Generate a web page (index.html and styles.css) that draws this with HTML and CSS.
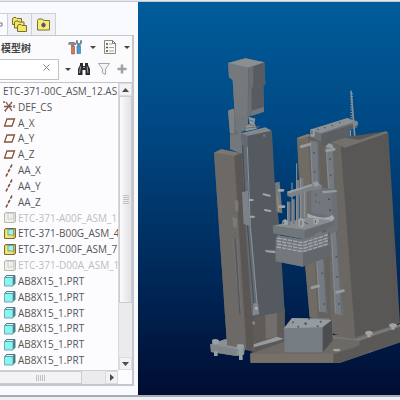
FILE: index.html
```
<!DOCTYPE html>
<html lang="zh-CN">
<head>
    <meta charset="UTF-8">
    <meta name="viewport" content="width=device-width, initial-scale=1.0">
    <title>模型树</title>
    <link rel="stylesheet" href="styles.css">
</head>
<body>

<!-- shared icons -->
<svg class="defs" width="0" height="0">
    <symbol id="i-csys" viewBox="0 0 13 13">
        <path d="M1 6.5h8M3 2l6 9M9 2L2 11" stroke="#855743" stroke-width="1.3" fill="none"/>
        <path d="M0 1l2 2M2 1L0 3M1 10l2 2M10 5l2 3M12 5l-2 3" stroke="#8d8580" fill="none"/>
    </symbol>
    <symbol id="i-plane" viewBox="0 0 13 13">
        <path d="M4 3H11.500L9 10H1.500z" fill="#fff" stroke="#875238" stroke-width="1.3"/>
    </symbol>
    <symbol id="i-axis" viewBox="0 0 13 13">
        <path d="M3 12.500L9 .5" stroke="#855039" stroke-width="1.6" stroke-dasharray="3.500 1.500" fill="none"/>
    </symbol>
    <symbol id="i-asm" viewBox="0 0 13 13">
        <path d="M1.500 2.500l1-1h10v9l-1 1h-10z" fill="#d9b83f" stroke="#6f6a45"/>
        <path d="M2 3h3v5h5v3H2z" fill="#fbe35f"/>
        <path d="M5 2.500h5.500v5.500H5z" fill="#93f4f6" stroke="#5f9ba0" stroke-width=".8"/>
    </symbol>
    <symbol id="i-part" viewBox="0 0 13 13">
        <path d="M1.500 3.500l2-2h8.500v8l-2 2z" fill="#3f8791" stroke="#4d6164" stroke-width=".8"/>
        <path d="M1.500 3.500h8.500v8.500h-8.500z" fill="#8af4f3" stroke="#5f989c" stroke-width=".8"/>
        <path d="M2.500 3l1.500-1H11L9.500 3z" fill="#c8fbfb"/>
    </symbol>
</svg>

<div class="app">
    <div class="ribbon"></div>
    <div class="main">
        <div class="side">
            <div class="tabs">
                <button class="tab tab-active" type="button" aria-label="模型树">
                    <svg width="3" height="5"><path d="M0 1h2v3H0" fill="none" stroke="#7d7088"/></svg>
                </button>
                <button class="tab" type="button" aria-label="文件夹浏览器">
                    <svg width="17" height="17" viewBox="0 0 17 17">
                        <g fill="#f4e766" stroke="#746f34">
                            <path d="M1.500 8.500v-6L3 1.500h2l1 1h4.500v6z"/>
                            <path d="M3.500 12V6L5 5h2l1 1h5v6z"/>
                            <path d="M6.500 15.500V9.500l1.500-1h2l1 1h4.500v6z"/>
                        </g>
                    </svg>
                </button>
                <button class="tab" type="button" aria-label="收藏夹">
                    <svg width="15" height="15" viewBox="0 0 15 15">
                        <path d="M1.500 13V3.500l1-1.500h4l1 1.500H13.500V13z" fill="#f6ed70" stroke="#77723b"/>
                        <path d="M7.500 5.500v5M5 8h5M6 6.500l3 3M9 6.500l-3 3" stroke="#514f8c" stroke-width="1.200"/>
                    </svg>
                </button>
            </div>

            <div class="panel">
                <div class="title-row">
                    <h2>模型树</h2>
                    <button class="tool" type="button" aria-label="设置">
                        <svg width="16" height="16" viewBox="0 0 16 16">
                            <path d="M1 5l1-2h5l2 1v2H7v1H4V5.500L2 6z" fill="#7d8a93"/>
                            <path d="M4.500 7h3v8h-3z" fill="#d9794c" stroke="#925139" stroke-width=".6"/>
                            <path d="M10 7h3.500v7.500H10z" fill="#4b9cd0" stroke="#34709b" stroke-width=".6"/>
                            <path d="M9 1v3l1.500 3H13l2-3V1l-2 .5V4h-2V1.500z" fill="#71899a"/>
                        </svg>
                    </button>
                    <span class="caret"></span>
                    <button class="tool" type="button" aria-label="显示">
                        <svg width="14" height="16" viewBox="0 0 14 16">
                            <path d="M1.500 1.500h8l3 3v10h-11z" fill="#fafaf4" stroke="#8b8b82"/>
                            <path d="M9.500 1.500v3h3" fill="none" stroke="#77776f"/>
                            <path d="M3 5h2M3 8.500h2M3 12h2" stroke="#4c4c4c" stroke-width="1.500"/>
                            <path d="M6 5h3M6 8.500h5M6 12h5" stroke="#a5a5a5"/>
                        </svg>
                    </button>
                    <span class="caret"></span>
                </div>

                <div class="search-row">
                    <div class="search">
                        <input type="text" aria-label="搜索">
                        <button class="clear" type="button" aria-label="清除">
                            <svg width="7" height="7" viewBox="0 0 7 7"><path d="M.5.5l6 6M6.500.5l-6 6" stroke="#858585"/></svg>
                        </button>
                    </div>
                    <span class="caret"></span>
                    <button class="tool" type="button" aria-label="查找">
                        <svg width="14" height="14" viewBox="0 0 14 14">
                            <path d="M3 1h3v3h2V1h3v2l2 4v6H8.500V8h-3v5H1V7l2-4z" fill="#2c2c2c"/>
                            <path d="M3.500 4.500L2.500 11M10 4.500l1 6.500M6 5.500h2" stroke="#a5a5a5"/>
                        </svg>
                    </button>
                    <button class="tool" type="button" aria-label="过滤">
                        <svg width="14" height="14" viewBox="0 0 14 14">
                            <path d="M1.500 1.500h11L8.500 7v5.500l-3-1.500V7z" fill="#f4f4f4" stroke="#a5a5a5"/>
                        </svg>
                    </button>
                    <button class="tool" type="button" aria-label="添加">
                        <svg width="10" height="10" viewBox="0 0 10 10">
                            <path d="M5 .5v9M.5 5h9" stroke="#a0a0a0" stroke-width="2.500"/>
                        </svg>
                    </button>
                </div>

                <div class="tree-box">
                    <ul class="tree">
                        <li class="root">ETC-371-00C_ASM_12.AS</li>
                        <li><svg class="icon"><use href="#i-csys"/></svg>DEF_CS</li>
                        <li><svg class="icon"><use href="#i-plane"/></svg>A_X</li>
                        <li><svg class="icon"><use href="#i-plane"/></svg>A_Y</li>
                        <li><svg class="icon"><use href="#i-plane"/></svg>A_Z</li>
                        <li><svg class="icon"><use href="#i-axis"/></svg>AA_X</li>
                        <li><svg class="icon"><use href="#i-axis"/></svg>AA_Y</li>
                        <li><svg class="icon"><use href="#i-axis"/></svg>AA_Z</li>
                        <li class="hidden-part"><svg class="icon"><use href="#i-asm"/></svg>ETC-371-A00F_ASM_1</li>
                        <li><svg class="icon"><use href="#i-asm"/></svg>ETC-371-B00G_ASM_4</li>
                        <li><svg class="icon"><use href="#i-asm"/></svg>ETC-371-C00F_ASM_7</li>
                        <li class="hidden-part"><svg class="icon"><use href="#i-asm"/></svg>ETC-371-D00A_ASM_1</li>
                        <li><svg class="icon"><use href="#i-part"/></svg>AB8X15_1.PRT</li>
                        <li><svg class="icon"><use href="#i-part"/></svg>AB8X15_1.PRT</li>
                        <li><svg class="icon"><use href="#i-part"/></svg>AB8X15_1.PRT</li>
                        <li><svg class="icon"><use href="#i-part"/></svg>AB8X15_1.PRT</li>
                        <li><svg class="icon"><use href="#i-part"/></svg>AB8X15_1.PRT</li>
                        <li><svg class="icon"><use href="#i-part"/></svg>AB8X15_1.PRT</li>
                    </ul>
                    <div class="vscroll">
                        <button class="arrow" type="button" aria-label="向上滚动"><svg width="7" height="4"><path d="M0 4l3.500-4L7 4z" fill="#4c4c4c"/></svg></button>
                        <div class="vthumb"><svg width="6" height="9"><path d="M0 .5h6M0 2.500h6M0 4.500h6M0 6.500h6M0 8.500h6" stroke="#c0c0c3"/></svg></div>
                        <div class="track"></div>
                        <button class="arrow" type="button" aria-label="向下滚动"><svg width="7" height="4"><path d="M0 0l3.500 4L7 0z" fill="#4c4c4c"/></svg></button>
                    </div>
                    <div class="hscroll">
                        <div class="hthumb"><svg width="9" height="6"><path d="M.5 0v6M2.500 0v6M4.500 0v6M6.500 0v6M8.500 0v6" stroke="#c0c0c3"/></svg></div>
                        <div class="track"></div>
                        <button class="arrow" type="button" aria-label="向右滚动"><svg width="4" height="7"><path d="M0 0l4 3.500L0 7z" fill="#4c4c4c"/></svg></button>
                    </div>
                </div>
            </div>
        </div>

        <div class="viewer">
            <svg viewBox="0 6 786 1179" preserveAspectRatio="xMidYMid meet">
                <!-- base plate -->
                <path d="M337 1060L440 1018L585 1005L786 975V1027L606 1088H338z" fill="#6d6a66"/>
                <path d="M337 1062H586L650 1040L786 995V1027L606 1088H338z" fill="#625f5b"/>
                <path d="M337 1062H586V1088H338z" fill="#777069"/>
                <path d="M586 1062L664 1040V1018L786 978V1027L606 1088H586z" fill="#5b5957"/>
                <path d="M580 1008L650 1018L786 972V980L664 1022L580 1014z" fill="#7b7875"/>

                <!-- left column -->
                <path d="M228 458L250 447L310 462L440 930V1018L345 1055L267 1035z" fill="#625d59"/>
                <path d="M228 458L289 468L306 640L326 1046L267 1035z" fill="#6c6966"/>
                <path d="M228 458L250 448L309 459L289 468z" fill="#7b7671"/>
                <path d="M289 468L309 459L348 940L345 1056L325 1046z" fill="#5a5653"/>
                <path d="M347 945L440 925V1016L347 1050z" fill="#5f5b58"/>
                <path d="M382 945L417 935V1010L383 1016z" fill="#716e6b"/>
                <path d="M347 1033L417 1010L437 1016L347 1050z" fill="#969b9e"/>
                <path d="M347 1042L437 1018V1026L347 1058z" fill="#5c5856"/>

                <!-- left carriage plate -->
                <path d="M276 400L300 394L330 405L328 450L312 462L276 448z" fill="#74787d"/>
                <path d="M270 332L284 326L300 334V402L276 405z" fill="#666b70"/>
                <path d="M270 332L284 326L289 330V400H276z" fill="#7d8286"/>
                <path d="M310 402L385 383L402 395L410 545L426 700L440 935L347 950z" fill="#555960"/>
                <path d="M310 402L329 405L330 570L362 945L342 948L323 690z" fill="#646a71"/>
                <path d="M308 400L382 382L401 392L329 407z" fill="#83888d"/>
                <path d="M328 440L337 680L357 910" fill="none" stroke="#8b9298" stroke-width="3"/>
                <path d="M314 435L320 575L350 940" fill="none" stroke="#474c52" stroke-width="3"/>
                <path d="M312 577L330 572L335 678L317 672z" fill="#7c8288"/>
                <path d="M346 910H360L364 942L344 946z" fill="#82888d"/>
                <circle cx="355" cy="925" r="4" fill="#b4b9bc"/>
                <circle cx="347" cy="969" r="5" fill="#88817c"/>
                <path d="M286 715L305 935M297 718L309 948" stroke="#77787c" stroke-width="2"/>
                <path d="M291 715L306 944" stroke="#54565c" stroke-width="4"/>
                <path d="M290 600L301 602V635L292 632zM283 650L297 655V684L285 680z" fill="#7b7977"/>
                <path d="M330 545V565" stroke="#5e7ca6" stroke-width="4"/>
                <g stroke="#a0a6aa" stroke-width="6" stroke-linecap="round">
                    <path d="M335 600h9M338 650h10M377 583l18 4M381 630l16 3"/>
                </g>
                <circle cx="379" cy="407" r="4" fill="#71767d"/>

                <!-- motor -->
                <path d="M270 189L322 175L379 187L382 253L376 257L378 335L331 350L290 342L284 240L273 232z" fill="#676b70"/>
                <path d="M270 189L331 203L328 365L297 386L290 342L284 240L273 232z" fill="#75797e"/>
                <path d="M331 203L379 187L382 253L376 257V325L330 350z" fill="#585b60"/>
                <path d="M270 189L322 175L379 187L331 203z" fill="#8b8f92"/>
                <path d="M331 203L346 198V258L341 266V344L330 350z" fill="#6b6f74"/>
                <path d="M340 332L378 321V335L341 347z" fill="#72767b"/>
                <path d="M292 345L330 350V386L305 399L292 390z" fill="#73777c"/>
                <path d="M331 350L352 356L349 370L357 386L322 394L325 378L335 371z" fill="#92979a"/>
                <path d="M322 385L365 380M334 360l12 4M328 373l20 4" stroke="#686d73" stroke-width="3"/>

                <!-- feet of the left column -->
                <path d="M217 1033L262 1017L322 1036L318 1064L296 1068L219 1056z" fill="#8b9093"/>
                <path d="M217 1033L296 1047V1068L219 1056z" fill="#7f8589"/>
                <path d="M267 1010L323 1024V1046L267 1036z" fill="#6c6966"/>
                <path d="M222 1020Q232 1014 243 1021V1032H223zM297 1034Q306 1029 318 1035V1044H314V1080H303V1046H297zM228 1054h11v14h-11z" fill="#999ea1"/>

                <!-- sensor strip -->
                <path d="M411 548L425 545L433 640L416 637z" fill="#777b7d"/>
                <path d="M419 585L422 635" stroke="#a58a66" stroke-width="3"/>
                <path d="M423 571h12M425 620h13" stroke="#9da2a6" stroke-width="8" stroke-linecap="round"/>

                <!-- right back column -->
                <path d="M477 414L510 402L576 418L610 1005L515 950L501 790L485 590z" fill="#65615d"/>
                <path d="M477 414L510 403L528 750L540 960L515 952L501 790z" fill="#716b66"/>
                <path d="M477 414L509 402L519 406L487 418z" fill="#837d77"/>
                <path d="M565 420L610 435L647 1014L580 1000z" fill="#6c6864"/>

                <!-- top arm -->
                <path d="M516 389L628 355L658 370V382L580 408L550 425L517 410z" fill="#6d7176"/>
                <path d="M516 389L628 354L655 364L548 400z" fill="#8b9094"/>
                <path d="M550 403L656 370V380L633 389V420L563 439L550 434z" fill="#5c5f62"/>
                <path d="M633 390L650 386V412H633z" fill="#105087"/>
                <path d="M637 390v22" stroke="#8798a6" stroke-width="4"/>
                <path d="M639 272L646 355L651 417" fill="none" stroke="#7f8e99" stroke-width="5"/>
                <path d="M641 280v75" stroke="#918d88" stroke-width="8" stroke-dasharray="3 5"/>
                <circle cx="652" cy="370" r="8" fill="#81868a"/>
                <path d="M518 388h12v22h-12z" fill="#9ca0a3"/>
                <path d="M522 391v12M538 388l5 2M558 382l5 2M580 376l5 2M603 367l5 2" stroke="#4c535b" stroke-width="3"/>

                <!-- right front column -->
                <path d="M577 427L620 412L745 394L751 400L786 970L647 1014L608 438z" fill="#595756"/>
                <path d="M577 427L620 413L668 420L608 438z" fill="#74706b"/>
                <path d="M608 438L743 394L751 398L620 443z" fill="#74726f"/>
                <path d="M577 427L608 438L652 1016L618 1008z" fill="#6b6763"/>

                <!-- guide rails -->
                <path d="M516 422L541 426L546 560L568 938L543 935L522 570z" fill="#757b80"/>
                <path d="M563 440L587 438L596 690L615 945L591 943L577 690z" fill="#757b80"/>
                <path d="M539 428L544 560L566 935M586 448L594 680L612 941" fill="none" stroke="#565d65" stroke-width="2"/>
                <path d="M518 428L524 570L545 932M565 448L580 690L593 940" fill="none" stroke="#8c9296" stroke-width="2"/>
                <g fill="#4e5760">
                    <circle cx="528" cy="459" r="3"/><circle cx="530" cy="515" r="3"/>
                    <circle cx="576" cy="478" r="3"/><circle cx="578" cy="526" r="3"/>
                    <circle cx="553" cy="820" r="3"/><circle cx="558" cy="912" r="3"/>
                    <circle cx="595" cy="770" r="3"/><circle cx="598" cy="830" r="3"/><circle cx="603" cy="912" r="3"/>
                </g>
                <path d="M490 440L515 433M522 863L542 858M596 877L616 872M566 452L588 448" stroke="#969b9f" stroke-width="9" stroke-linecap="round"/>
                <path d="M562 440L572 430L584 434L586 446z" fill="#969b9f"/>

                <!-- gripper bracket -->
                <path d="M516 555L585 568L596 573L600 690L580 703L518 660z" fill="#6a7076"/>
                <path d="M520 568L580 573L583 650L520 637z" fill="#71777d"/>
                <path d="M508 640Q560 663 583 645L590 655Q580 670 550 677L508 662z" fill="#a3a8ab"/>
                <path d="M552 573L596 570V576L556 580z" fill="#979c9f"/>
                <g fill="#485059">
                    <circle cx="535" cy="585" r="2"/><circle cx="534" cy="605" r="2"/><circle cx="545" cy="608" r="2"/>
                    <circle cx="573" cy="598" r="3"/><circle cx="576" cy="631" r="3"/>
                </g>

                <!-- gripper block -->
                <path d="M404 678L508 653L590 665V675L500 718L406 700z" fill="#676b70"/>
                <path d="M404 678L508 652L588 662L500 690z" fill="#878c90"/>
                <path d="M404 678L500 690V718L406 700z" fill="#70767a"/>
                <path d="M420 705L495 718L570 693V745L495 765L413 750V715z" fill="#71777c"/>
                <path d="M413 742L495 757L576 735V768L495 800L413 784z" fill="#63676b"/>
                <path d="M413 742L495 757V800L413 784z" fill="#74787c"/>
                <g fill="none" stroke="#a3a8ab" stroke-width="4" stroke-dasharray="13 3">
                    <path d="M418 714L495 728L570 704"/>
                    <path d="M416 723L495 737L572 713"/>
                    <path d="M418 732L495 746L570 722"/>
                    <path d="M416 741L495 755L572 731"/>
                </g>
                <path d="M380 750L412 752V760L385 757z" fill="#9aa0a3"/>

                <!-- pins and clamps -->
                <path d="M453 675V605M466 673V598M480 670V540M492 667V535M502 652V570" stroke="#757b80" stroke-width="9"/>
                <path d="M449 675V605M462 675V548M476 670V490M488 665V535M499 652V570" stroke="#92979b" stroke-width="3"/>
                <path d="M447 575L520 553L530 545L553 556L549 568L520 571L460 592L448 588z" fill="#7b8186"/>
                <path d="M447 575L520 552L524 557L453 580z" fill="#999ea1"/>
                <path d="M524 548L538 543L545 556L530 561z" fill="#969b9f"/>
                <g fill="#a0a5a8">
                    <path d="M433 662l8-5 8 5v12h-16zM525 658l9-5 10 6-5 14h-11zM480 659l8-6 12 6v15l-8 10-10-5z"/>
                </g>
                <path d="M437 665v7M489 661v16M498 667l12 5M532 660v9" stroke="#596067" stroke-width="3"/>

                <!-- front box -->
                <path d="M438 985L462 954L572 955L584 965V1022L553 1057H440z" fill="#757d83"/>
                <path d="M438 985L462 954L582 960L554 982z" fill="#959ca0"/>
                <path d="M554 982L582 960L584 1022L554 1057z" fill="#4c4d50"/>
                <g fill="#535b62">
                    <circle cx="465" cy="967" r="3"/><circle cx="503" cy="971" r="4"/><circle cx="548" cy="965" r="3"/>
                    <circle cx="481" cy="980" r="3"/><circle cx="539" cy="979" r="3"/><circle cx="513" cy="957" r="3"/>
                </g>

                <!-- base bolts -->
                <g fill="#9fa3a4">
                    <path d="M682 996q10-7 22 0v7l-6 2v7h-10v-7l-6-2zM754 973q10-7 22 0v7l-6 2v7h-10v-7l-6-2z"/>
                    <ellipse cx="596" cy="1050" rx="11" ry="4"/>
                </g>
                <path d="M690 1053l12-4v6l-10 4z" fill="#65625f"/>
            </svg>
        </div>
    </div>
    <div class="status"></div>
</div>

</body>
</html>
```
FILE: styles.css
```
* {
    box-sizing: border-box;
}
body {
    margin: 0;
    font-family: "Open Sans", "Noto Sans CJK SC", sans-serif;
    font-size: 10px;
    color: #555;
    background-color: #f3f5f9;
}
button {
    padding: 0;
    border: none;
    background: none;
    display: flex;
    align-items: center;
    justify-content: center;
}
.defs {
    position: absolute;
}
.app {
    display: flex;
    flex-direction: column;
    height: 100vh;
}
.ribbon {
    height: 2px;
    background-color: #e3e8f0;
    border-bottom: 1px solid #c3c8cf;
}
.main {
    flex: 1;
    display: flex;
    min-height: 0;
}
.side {
    width: 138px;
    display: flex;
    flex-direction: column;
    padding: 11px 4px 9px 0;
    background-color: #f9fafd;
}

/* tabs */
.tabs {
    display: flex;
    height: 22px;
}
.tab {
    width: 24px;
    background-color: #eff0f4;
    border: 1px solid #cfd0d6;
    border-left: none;
    border-bottom: none;
}
.tab-active {
    width: 8px;
    justify-content: flex-start;
    background-color: #fcfcfe;
}

.panel {
    flex: 1;
    display: flex;
    flex-direction: column;
    min-height: 0;
    border: 1px solid #c6c7cc;
    border-left: none;
    border-right: 2px solid #c6c7cc;
    border-bottom: 2px solid #c6c7cc;
    background-color: #fbfbfe;
}
.title-row {
    display: flex;
    align-items: center;
    height: 22px;
    gap: 7px;
    padding-right: 2px;
}
.title-row h2 {
    flex: 1;
    margin: 0;
    padding-left: 1px;
    font-size: 10px;
    font-weight: bold;
    color: #444;
    white-space: nowrap;
}
.caret {
    border: 3px solid transparent;
    border-top: 3px solid #444;
    border-bottom: none;
}
.search-row {
    display: flex;
    align-items: center;
    height: 22px;
    gap: 6px;
    padding-right: 5px;
}
.search {
    flex: 1;
    min-width: 0;
    display: flex;
    height: 21px;
    border: 1px solid #c3c4c9;
    border-left: none;
    background-color: #fff;
}
.search input {
    flex: 1;
    min-width: 0;
    border: none;
    padding: 0 2px;
    font: inherit;
    background: none;
}
.clear {
    width: 24px;
    height: 16px;
}

/* model tree */
.tree-box {
    flex: 1;
    min-height: 0;
    display: grid;
    grid-template-columns: 1fr 14px;
    grid-template-rows: 1fr 14px;
    margin-top: 2px;
    border-top: 1px solid #c3c4c9;
    background-color: #fcfcfe;
}
.tree {
    display: flex;
    flex-direction: column;
    min-width: 0;
    margin: 0;
    padding: 0 0 2px 3px;
    list-style: none;
    overflow: hidden;
}
.tree li {
    flex: 1;
    display: flex;
    align-items: center;
    gap: 2px;
    line-height: 14px;
    white-space: nowrap;
}
.icon {
    width: 13px;
    height: 13px;
    flex-shrink: 0;
}
.hidden-part {
    color: #bcbcbe;
}
.hidden-part .icon {
    filter: grayscale(0.7);
    opacity: 0.45;
}

/* scroll bars */
.vscroll {
    display: flex;
    flex-direction: column;
    border-left: 1px solid #d8d8dc;
    background-color: #ebebee;
}
.hscroll {
    display: flex;
    border-top: 1px solid #d0d0d4;
    background-color: #ebebee;
}
.arrow {
    width: 13px;
    height: 13px;
    background-color: #f2f2f5;
    border: 1px solid #dcdce0;
}
.vthumb {
    flex: 79;
    display: flex;
    align-items: center;
    justify-content: center;
    border: 1px solid #cbcbd0;
    background-image: linear-gradient(to right, #fafafc, #e2e2e6);
}
.vscroll .track {
    flex: 21;
}
.hthumb {
    flex: 78;
    display: flex;
    align-items: center;
    justify-content: center;
    border: 1px solid #cbcbd0;
    border-left: none;
    background-color: #f3f3f6;
}
.hscroll .track {
    flex: 22;
}

/* 3D view */
.viewer {
    flex: 1;
    min-width: 0;
    background-image: linear-gradient(#005c9b, #004a85 30%, #002c5e 65%, #000d33);
}
.viewer svg {
    display: block;
    width: 100%;
    height: 100%;
}
.status {
    height: 5px;
    border-top: 2px solid #a5acb5;
    background-color: #eceff3;
}
```
